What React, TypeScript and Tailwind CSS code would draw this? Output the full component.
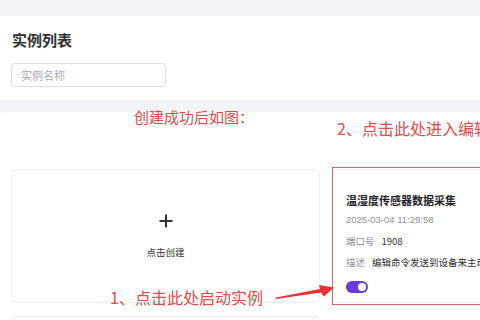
const font = { fontFamily: '"Noto Sans CJK SC", "Noto Sans", sans-serif' };

function CreateCard() {
    return (
        <div className="h-[134px] rounded-[6px] border border-[#ebeef5] bg-white flex flex-col items-center justify-center gap-[17px]">
            <svg width="14" height="14" viewBox="0 0 14 14">
                <path d="M7 0.5v13M0.5 7h13" stroke="#303133" strokeWidth="2" />
            </svg>
            <span className="text-[9.5px] leading-[14px] text-[#303133]">点击创建</span>
        </div>
    );
}

function InstanceCard() {
    return (
        <div className="relative h-[134px] rounded-[6px] border border-[#ebeef5] bg-white pl-[13px] pt-[22px] flex flex-col">
            <div className="absolute -left-[1px] -top-[3px] -bottom-[3px] w-[320px] border border-[#e06666]" />
            <div className="text-[11px] leading-[16px] font-bold text-[#1f2329] whitespace-nowrap">温湿度传感器数据采集</div>
            <div
                className="mt-[5px] text-[9.5px] leading-[14px] text-[#909399] whitespace-nowrap"
                style={{ fontFamily: '"Liberation Sans", "Noto Sans CJK SC", sans-serif' }}
            >
                2025-03-04 11:29:58
            </div>
            <div className="mt-[7px] flex gap-[7px] text-[9.5px] leading-[14px] whitespace-nowrap">
                <span className="text-[#909399]">端口号</span>
                <span className="text-[#303133]">1908</span>
            </div>
            <div className="mt-[7px] flex gap-[7px] text-[9.5px] leading-[14px] whitespace-nowrap">
                <span className="text-[#909399]">描述</span>
                <span className="text-[#303133]">编辑命令发送到设备来主动获取数据</span>
            </div>
            <div className="mt-[12px] w-[22px] h-[12px] rounded-full bg-[#6a3bd6] flex items-center justify-end pr-[2px]">
                <div className="w-[8px] h-[8px] rounded-full bg-white" />
            </div>
        </div>
    );
}

export default function App() {
    return (
        <div className="relative w-[480px] h-[320px] overflow-hidden bg-[#f3f4f8] pt-[16px]" style={font}>
            <div className="h-[84px] bg-white pl-[11px] pt-[14px]">
                <h1 className="text-[15px] leading-[20px] font-bold text-[#303133] pl-[1px]">实例列表</h1>
                <div className="mt-[13px] w-[155px] h-[24px] rounded-[4px] border border-[#dcdfe6] flex items-center pl-[9px]">
                    <span className="text-[11px] text-[#a8abb2]">实例名称</span>
                </div>
            </div>

            <div className="mt-[12px] h-[300px] rounded-[4px] bg-white pt-[57px] pl-[11px]">
                <div className="grid grid-cols-[309px_309px] gap-x-[12px] gap-y-[13px]">
                    <CreateCard />
                    <InstanceCard />
                    <div className="h-[134px] rounded-[6px] border border-[#ebeef5] bg-white" />
                </div>
            </div>

            <div className="absolute left-[134px] top-[107px] text-[15px] leading-[20px] text-[#e24c4c] whitespace-nowrap">
                创建成功后如图：
            </div>
            <div className="absolute left-[337px] top-[118px] text-[16px] leading-[20px] text-[#e24c4c] whitespace-nowrap">
                2、点击此处进入编辑
            </div>
            <div className="absolute left-[110px] top-[287px] text-[16px] leading-[20px] text-[#e24c4c] whitespace-nowrap">
                1、点击此处启动实例
            </div>
            <svg className="absolute left-[270px] top-[280px]" width="70" height="25" viewBox="0 0 70 25">
                <polygon points="6,17.5 6,19 51,12.5 54,16.5 64,7.5 49,5 50,9" fill="#ee3030" />
            </svg>
        </div>
    );
}
